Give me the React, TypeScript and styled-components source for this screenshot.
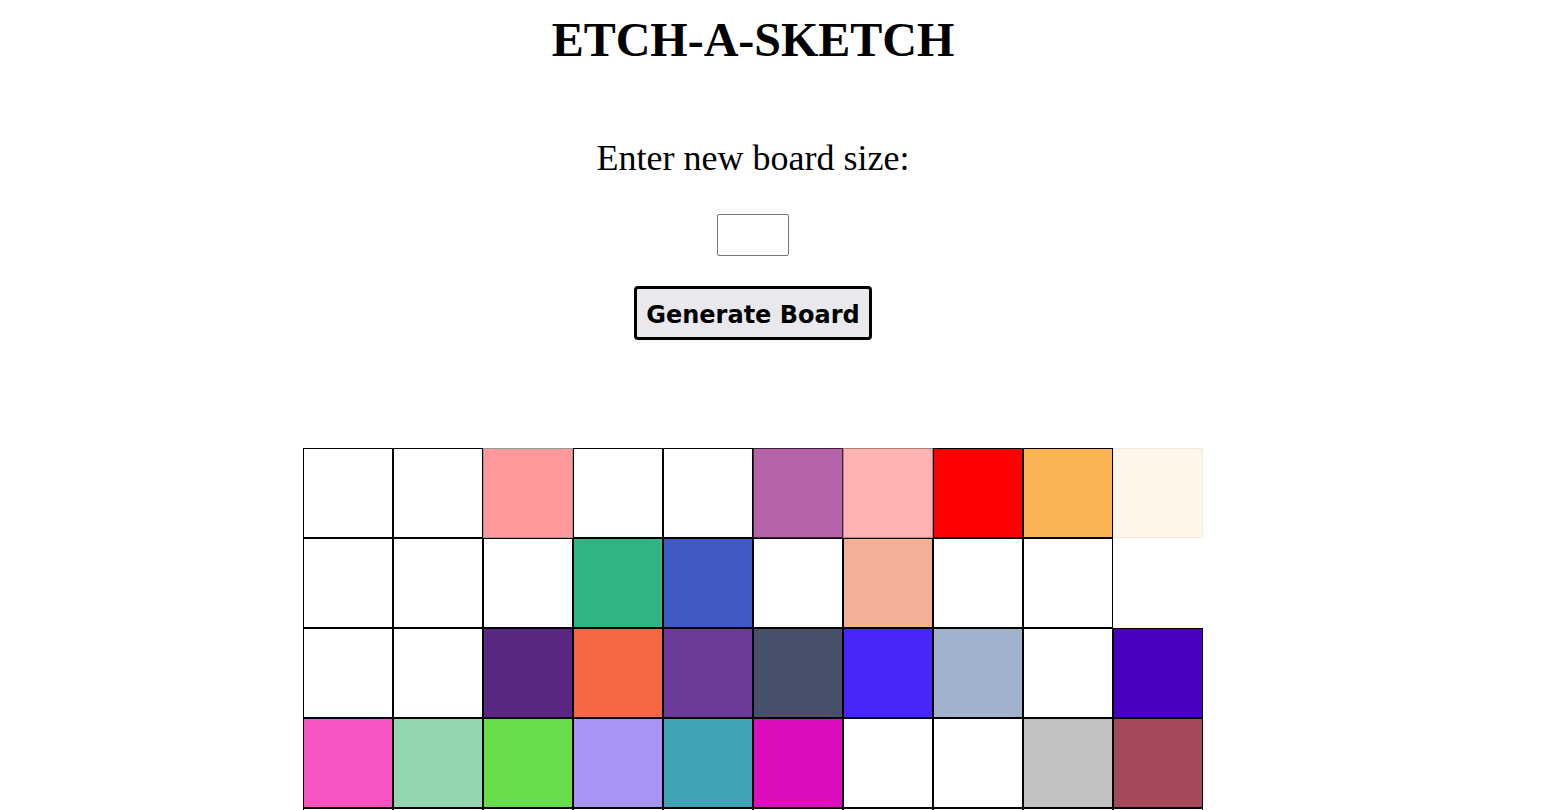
import React from "react";
import styled, { createGlobalStyle } from "styled-components";

const GlobalStyle = createGlobalStyle`
  html, body {
    margin: 0;
    padding: 0;
    background: #ffffff;
  }
  body {
    font-family: "Liberation Serif", "Times New Roman", serif;
    color: #000000;
  }
`;

const Page = styled.main`
  width: 1506px;
  display: flex;
  flex-direction: column;
  align-items: center;
`;

const Title = styled.h1`
  margin: 12px 0 0;
  font-family: "Liberation Serif", "Times New Roman", serif;
  font-weight: 700;
  font-size: 48px;
  line-height: 56px;
`;

const Controls = styled.form`
  display: flex;
  flex-direction: column;
  align-items: center;
`;

const Label = styled.label`
  margin-top: 69px;
  font-family: "Liberation Serif", "Times New Roman", serif;
  font-size: 36px;
  line-height: 42px;
`;

const SizeInput = styled.input`
  margin-top: 35px;
  box-sizing: border-box;
  width: 72px;
  height: 42px;
  border: 1px solid #767676;
  border-radius: 2px;
  padding: 0 4px;
  font-size: 16px;
  background: #ffffff;
`;

const GenerateButton = styled.button`
  margin-top: 30px;
  box-sizing: border-box;
  height: 54px;
  padding: 3px 9px 0;
  border: 3px solid #000000;
  border-radius: 4px;
  background: #e9e9ed;
  font-family: "DejaVu Sans", Verdana, sans-serif;
  font-weight: 700;
  font-size: 24px;
  color: #000000;
  cursor: pointer;
`;

const Board = styled.div`
  margin-top: 108px;
  display: grid;
  grid-template-columns: repeat(10, 90px);
  grid-auto-rows: 90px;
`;

const Cell = styled.div<{ $bg: string; $edge: string }>`
  box-sizing: border-box;
  background: ${(p) => p.$bg};
  border: 1px solid ${(p) => p.$edge};
`;

type C = [string, string];
const W: C = ["#ffffff", "#000000"];

const rows: C[][] = [
  [
    W,
    W,
    ["#ff9999", "#999999"],
    W,
    W,
    ["#b763ab", "#3a1f36"],
    ["#ffb3b3", "#b38080"],
    ["#ff0000", "#000000"],
    ["#fab454", "#000000"],
    ["#fff5e8", "#efe8de"],
  ],
  [
    W,
    W,
    W,
    ["#31b484", "#000000"],
    ["#405ac3", "#000000"],
    W,
    ["#f4b096", "#000000"],
    W,
    W,
    ["#ffffff", "#ffffff"],
  ],
  [
    W,
    W,
    ["#5a2782", "#000000"],
    ["#f86744", "#000000"],
    ["#6e3a9a", "#000000"],
    ["#465169", "#000000"],
    ["#4626f8", "#000000"],
    ["#a2b2cc", "#000000"],
    W,
    ["#4a00be", "#000000"],
  ],
  [
    ["#f754c2", "#000000"],
    ["#95d5b0", "#000000"],
    ["#66dd49", "#000000"],
    ["#a794f3", "#000000"],
    ["#3fa2b5", "#000000"],
    ["#dc0dbe", "#000000"],
    W,
    W,
    ["#c3c1c2", "#000000"],
    ["#a4485a", "#000000"],
  ],
];

for (let r = 0; r < 6; r++) {
  rows.push(Array.from({ length: 10 }, () => W));
}

export default function App() {
  return (
    <>
      <GlobalStyle />
      <Page>
        <Title>ETCH-A-SKETCH</Title>
        <Controls onSubmit={(e) => e.preventDefault()}>
          <Label htmlFor="size">Enter new board size:</Label>
          <SizeInput id="size" type="text" />
          <GenerateButton type="submit">Generate Board</GenerateButton>
        </Controls>
        <Board>
          {rows.flatMap((row, r) =>
            row.map(([bg, edge], c) => (
              <Cell key={`${r}-${c}`} $bg={bg} $edge={edge} />
            ))
          )}
        </Board>
      </Page>
    </>
  );
}
